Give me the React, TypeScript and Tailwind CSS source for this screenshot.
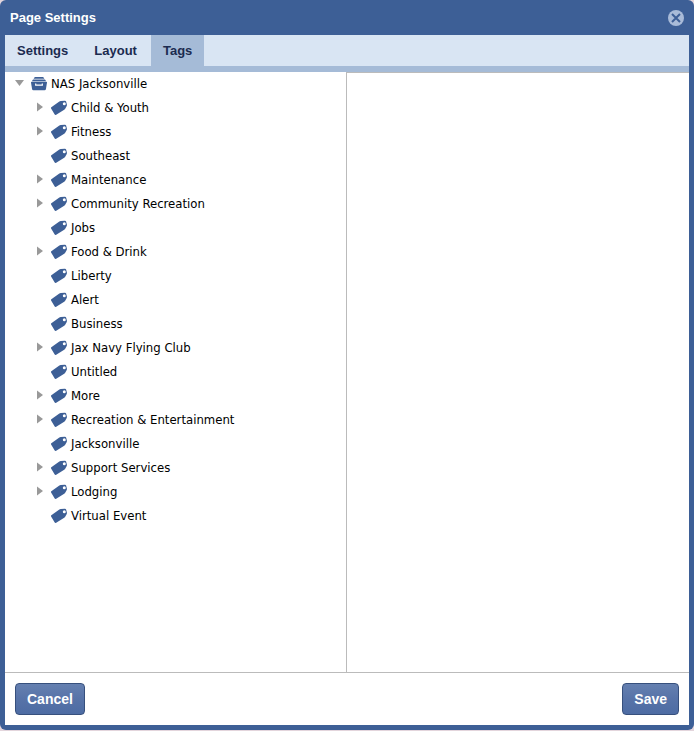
import { useState } from 'react';

type Tag = {
    name: string;
    hasChildren?: boolean;
};

const tabs = ['Settings', 'Layout', 'Tags'];

const tags: Tag[] = [
    { name: 'Child & Youth', hasChildren: true },
    { name: 'Fitness', hasChildren: true },
    { name: 'Southeast' },
    { name: 'Maintenance', hasChildren: true },
    { name: 'Community Recreation', hasChildren: true },
    { name: 'Jobs' },
    { name: 'Food & Drink', hasChildren: true },
    { name: 'Liberty' },
    { name: 'Alert' },
    { name: 'Business' },
    { name: 'Jax Navy Flying Club', hasChildren: true },
    { name: 'Untitled' },
    { name: 'More', hasChildren: true },
    { name: 'Recreation & Entertainment', hasChildren: true },
    { name: 'Jacksonville' },
    { name: 'Support Services', hasChildren: true },
    { name: 'Lodging', hasChildren: true },
    { name: 'Virtual Event' },
];

const TagIcon = () => (
    <svg className="h-4 w-4 shrink-0" viewBox="0 0 16 16" aria-hidden="true">
        <path
            fill="#3d5f96"
            fillRule="evenodd"
            d="M.3 7.200 8 1.800Q8.800 1.200 9.800 1.100L13.700.7Q14.900.6 15.200 1.700L15.900 4.600Q16.100 5.500 15.600 6.300L14.200 8.800Q13.900 9.400 13.200 9.800L5.200 14.800Q4.300 15.300 3.700 14.500L.1 8.400Q-.3 7.600.3 7.200ZM13.300 2.300A1.500 1.500 0 1 0 13.300 5.300A1.500 1.500 0 1 0 13.300 2.300Z"
        />
    </svg>
);

const DrawerIcon = () => (
    <svg className="h-4 w-4 shrink-0" viewBox="0 0 16 16" aria-hidden="true">
        <path fill="#3d5f96" d="M3.800 1h8.400l1.200 1.800H2.600z" />
        <path fill="#3d5f96" d="M2 3.400h12l1.200 1.900H.8z" />
        <path
            fill="#3d5f96"
            d="M.6 5.800h14.800q.7 0 .6.700l-1.100 6.700q-.2 1.100-1.300 1.100H2.400q-1.100 0-1.300-1.100L0 6.500q-.1-.7.6-.7z"
        />
        <path fill="none" stroke="#fff" strokeWidth="1.200" d="M4.700 7.500v1.700h6.600v-1.700" />
    </svg>
);

const Arrow = ({ open }: { open?: boolean }) => (
    <svg className="h-3 w-3" viewBox="0 0 12 12" aria-hidden="true">
        <path fill="#999" d={open ? 'M2 2h9L6.500 8z' : 'M4 .5v9L10 5z'} />
    </svg>
);

const FooterButton = ({ children }: { children: string }) => (
    <button
        type="button"
        className="h-8 rounded-sm border border-[#37507d] bg-linear-to-b from-[#6580b0] from-0% via-[#5773a8] via-50% to-[#4d6ca3] px-[11px] text-sm font-bold text-white"
    >
        {children}
    </button>
);

export default function App() {
    const [activeTab, setActiveTab] = useState('Tags');
    const [open, setOpen] = useState(true);

    return (
        <div className="flex min-h-screen flex-col bg-[#e3d5dc] pb-px font-['Liberation_Sans',Arial,sans-serif]">
            <div className="flex flex-1 flex-col rounded-md bg-[#3d5f96] px-[5px] pb-[5px]">
                <header className="flex h-[35px] items-center justify-between px-[5px]">
                    <h1 className="text-[13px] font-bold text-white">Page Settings</h1>
                    <button type="button" aria-label="Close">
                        <svg className="h-4 w-4" viewBox="0 0 16 16" aria-hidden="true">
                            <circle cx="8" cy="8" r="8" fill="#a9bbd8" />
                            <path stroke="#3d5f96" strokeWidth="2" d="m4 4 8 8m0-8-8 8" />
                        </svg>
                    </button>
                </header>

                <nav className="flex h-[37px] gap-0.5 border-b-[6px] border-[#a5bbd7] bg-[#d9e5f3]" role="tablist">
                    {tabs.map((tab) => (
                        <button
                            key={tab}
                            type="button"
                            role="tab"
                            aria-selected={tab === activeTab}
                            onClick={() => setActiveTab(tab)}
                            className={`px-3 text-[13px] font-bold text-[#1b2b50] ${tab === activeTab ? 'bg-[#a5bbd7]' : ''}`}
                        >
                            {tab}
                        </button>
                    ))}
                </nav>

                <main className="flex flex-1 bg-white">
                    <div className="w-1/2 border-r border-[#bbb] font-['DejaVu_Sans_Condensed','DejaVu_Sans',sans-serif] text-[13px] text-black">
                        <div className="flex h-6 items-center pl-2">
                            <button type="button" aria-label="Toggle NAS Jacksonville" onClick={() => setOpen(!open)}>
                                <Arrow open={open} />
                            </button>
                            <span className="flex items-center gap-1 pl-1.5">
                                <DrawerIcon />
                                NAS Jacksonville
                            </span>
                        </div>
                        {open && (
                            <ul>
                                {tags.map((tag) => (
                                    <li key={tag.name} className="flex h-6 items-center pl-7">
                                        <span className="flex w-[18px]">{tag.hasChildren && <Arrow />}</span>
                                        <span className="flex items-center gap-1">
                                            <TagIcon />
                                            {tag.name}
                                        </span>
                                    </li>
                                ))}
                            </ul>
                        )}
                    </div>
                    <div className="flex-1 border-t border-[#bbb]"></div>
                </main>

                <footer className="flex items-center justify-between border-t border-[#bbb] bg-white p-2.5">
                    <FooterButton>Cancel</FooterButton>
                    <FooterButton>Save</FooterButton>
                </footer>
            </div>
        </div>
    );
}
